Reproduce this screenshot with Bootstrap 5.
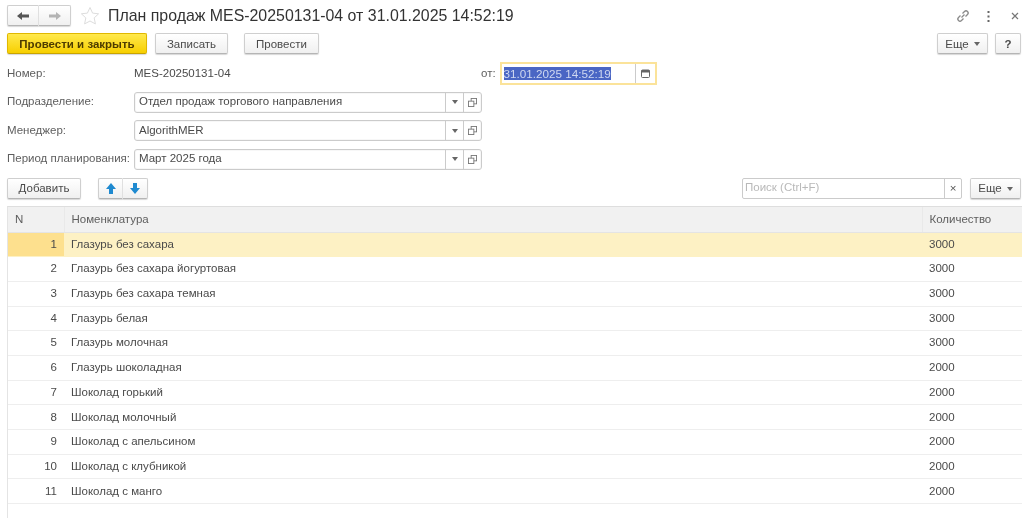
<!DOCTYPE html>
<html lang="ru">
<head>
  <meta charset="UTF-8">
  <title>План продаж</title>
  <link rel="stylesheet" href="https://cdn.jsdelivr.net/npm/bootstrap@5.3.0/dist/css/bootstrap.min.css">
  <style>
    html, body { height: 518px; overflow: hidden; }
    body { background: #fff; font-family: "Liberation Sans", Arial, sans-serif; font-size: 11.5px; color: #4a4a4a; }
    .page { padding: 4px 2px 0 7px; filter: blur(.3px); }
    .title-bar { height: 24px; }
    .nav-pair { width: 64px; height: 22px; margin-right: 9px; }
    .btn-1c { height: 21px; padding: 0; font-size: 11.5px; line-height: 18px; color: #4a4a4a; background: linear-gradient(#fff, #f0f0f0); border: 1px solid #cfcfcf; border-bottom-color: #b5b5b5; border-radius: 2px; box-shadow: 0 1px 1px #d8d8d8; }
    .btn-main { width: 140px; font-weight: 700; color: #4d3c00; background: linear-gradient(#ffe94d, #f7cf00); border-color: #e0b800; border-bottom-color: #c9a400; }
    .w-save { width: 73px; }
    .w-post { width: 75px; }
    .w-more { width: 51px; }
    .w-help { width: 26px; font-weight: 700; margin-left: 7px; }
    .w-add { width: 74px; }
    .seg { width: 32px; display: flex; align-items: center; justify-content: center; border-radius: 0; }
    .seg-l { border-radius: 2px 0 0 2px; border-right-color: #e2e2e2; }
    .seg-r { border-radius: 0 2px 2px 0; border-left: 0; }
    .seg-s { width: 25px; }
    .move-pair { margin-left: 17px; }
    .doc-title { font-size: 15.9px; color: #333; margin-left: 8px; white-space: nowrap; }
    .ic-dots { margin-left: 16px; }
    .ic-close { margin-left: 21px; margin-right: 3px; }
    .cmd-bar { margin-top: 4px; height: 23px; padding-right: 1px; }
    .form-line { height: 21px; margin-top: 7.5px; }
    .first-line { margin-top: 8px; }
    .lbl { width: 127px; color: #5e5e5e; flex: none; white-space: nowrap; }
    .no-val { width: 347px; }
    .fld { width: 348px; height: 21px; border: 1px solid #cbcbcb; border-radius: 3px; background: #fff; box-shadow: inset 0 0 0 1px #f7f7f7; }
    .fld-txt { flex: 1; padding-left: 4px; color: #4a4a4a; }
    .fld-cell { width: 18px; height: 100%; border-left: 1px solid #cbcbcb; display: flex; align-items: center; justify-content: center; }
    .date-lbl { color: #5e5e5e; }
    .date-fld { width: 157px; height: 23px; border: 2px solid #fbe39a; background: #fff; }
    .date-cell { width: 20px; }
    .sel-txt { background: #4a66c4; color: #cfd8f0; margin-left: 2px; line-height: 13px; font-size: 11.7px; }
    .caret { display: inline-block; border-top: 4px solid #666; border-left: 3px solid transparent; border-right: 3px solid transparent; vertical-align: middle; margin-left: 5px; }
    .fld-cell .caret { margin-left: 0; }
    .tools { margin-top: 7px; height: 23px; padding-right: 1px; }
    .search { width: 220px; height: 21px; border: 1px solid #cbcbcb; border-radius: 2px; color: #b9b9b9; }
    .search-txt { flex: 1; padding-left: 2px; }
    .search-x { width: 17px; height: 100%; border-left: 1px solid #cbcbcb; text-align: center; color: #555; line-height: 18px; }
    .grid-wrap { width: 1015px; height: 312px; margin-top: 6.5px; border-left: 1px solid #e4e4e4; border-top: 1px solid #dedede; }
    .grid-tb { table-layout: fixed; width: 100%; border-collapse: collapse; color: #4a4a4a; }
    .grid-tb th { height: 25px; background: #f1f1f1; font-weight: 400; color: #5e5e5e; padding: 0 7px; border-bottom: 1px solid #e4e4e4; }
    .grid-tb td { height: 24.700px; padding: 0 7px; border-bottom: 1px solid #eeeeee; }
    .grid-tb th + th { border-left: 1px solid #e9e9e9; }
    .grid-tb td.num { text-align: right; }
    .grid-tb tr.cur td { background: #fdf1c4; border-bottom-color: #fdf1c4; }
    .grid-tb tr.cur td.num { background: #fde08e; }
    .c-n { width: 56px; }
    .c-q { width: 100px; }
  </style>
</head>
<body>
  <div class="page">
    <div class="title-bar d-flex align-items-center">
      <div class="nav-pair d-flex">
        <div class="btn-1c seg seg-l"><svg width="14" height="10" viewBox="0 0 14 10"><path d="M1 5l5-4v2.500h7v3H6V9z" fill="#555"/></svg></div>
        <div class="btn-1c seg seg-r"><svg width="14" height="10" viewBox="0 0 14 10"><path d="M13 5L8 1v2.500H1v3h7V9z" fill="#b4b4b4"/></svg></div>
      </div>
      <svg width="20" height="20" viewBox="0 0 20 20"><path d="M10 1.500l2.600 5.600 6 .7-4.400 4.100 1.200 6L10 15l-5.400 2.900 1.200-6L1.400 7.800l6-.7z" fill="#fff" stroke="#dcdcdc"/></svg>
      <div class="doc-title">План продаж MES-20250131-04 от 31.01.2025 14:52:19</div>
      <div class="ms-auto d-flex align-items-center">
        <svg width="16" height="14" viewBox="0 0 16 14" fill="none" stroke="#8a8a8a" stroke-width="1.300"><path d="M6.500 8.500l3-3M5.500 6.500L3.500 8.500a2 2 0 0 0 3 3l2-2M10.500 7.500l2-2a2 2 0 0 0-3-3l-2 2"/></svg>
        <svg class="ic-dots" width="3" height="11" viewBox="0 0 3 11" fill="#666"><rect x=".5" width="2" height="2"/><rect x=".5" y="4.500" width="2" height="2"/><rect x=".5" y="9" width="2" height="2"/></svg>
        <svg class="ic-close" width="8" height="8" viewBox="0 0 8 8" stroke="#777" stroke-width="1.200"><path d="M1 1l6 6M7 1L1 7"/></svg>
      </div>
    </div>

    <div class="cmd-bar d-flex align-items-center">
      <button class="btn-1c btn-main">Провести и закрыть</button>
      <button class="btn-1c w-save ms-2">Записать</button>
      <button class="btn-1c w-post ms-3">Провести</button>
      <button class="btn-1c w-more ms-auto">Еще<span class="caret"></span></button>
      <button class="btn-1c w-help">?</button>
    </div>

    <div class="form-line first-line d-flex align-items-center">
      <div class="lbl">Номер:</div>
      <div class="no-val">MES-20250131-04</div>
      <div class="date-lbl">от:</div>
      <div class="date-fld d-flex align-items-center ms-1">
        <span class="sel-txt">31.01.2025 14:52:19</span>
        <div class="fld-cell date-cell ms-auto"><svg width="9" height="9" viewBox="0 0 9 9"><rect x=".5" y="1" width="8" height="7.500" rx="1" fill="#fff" stroke="#666"/><rect x=".5" y="1" width="8" height="2.500" fill="#666"/></svg></div>
      </div>
    </div>
    <div class="form-line d-flex align-items-center">
      <div class="lbl">Подразделение:</div>
      <div class="fld d-flex align-items-center"><div class="fld-txt">Отдел продаж торгового направления</div><div class="fld-cell"><span class="caret"></span></div><div class="fld-cell"><svg width="9" height="9" viewBox="0 0 10 10" fill="#fff" stroke="#777"><rect x="3.500" y=".5" width="6" height="6"/><rect x=".5" y="3.500" width="6" height="6"/></svg></div></div>
    </div>
    <div class="form-line d-flex align-items-center">
      <div class="lbl">Менеджер:</div>
      <div class="fld d-flex align-items-center"><div class="fld-txt">AlgorithMER</div><div class="fld-cell"><span class="caret"></span></div><div class="fld-cell"><svg width="9" height="9" viewBox="0 0 10 10" fill="#fff" stroke="#777"><rect x="3.500" y=".5" width="6" height="6"/><rect x=".5" y="3.500" width="6" height="6"/></svg></div></div>
    </div>
    <div class="form-line d-flex align-items-center">
      <div class="lbl">Период планирования:</div>
      <div class="fld d-flex align-items-center"><div class="fld-txt">Март 2025 года</div><div class="fld-cell"><span class="caret"></span></div><div class="fld-cell"><svg width="9" height="9" viewBox="0 0 10 10" fill="#fff" stroke="#777"><rect x="3.500" y=".5" width="6" height="6"/><rect x=".5" y="3.500" width="6" height="6"/></svg></div></div>
    </div>

    <div class="tools d-flex align-items-center">
      <button class="btn-1c w-add">Добавить</button>
      <div class="d-flex move-pair">
        <div class="btn-1c seg seg-s seg-l"><svg width="12" height="13" viewBox="0 0 12 13"><path d="M6 1l5 6H8v5H4V7H1z" fill="#1f8ad0"/></svg></div>
        <div class="btn-1c seg seg-s seg-r"><svg width="12" height="13" viewBox="0 0 12 13"><path d="M6 12L1 6h3V1h4v5h3z" fill="#1f8ad0"/></svg></div>
      </div>
      <div class="search d-flex align-items-center ms-auto"><div class="search-txt">Поиск (Ctrl+F)</div><div class="search-x">×</div></div>
      <button class="btn-1c w-more ms-2">Еще<span class="caret"></span></button>
    </div>

    <div class="grid-wrap">
      <table class="grid-tb">
        <thead><tr><th class="c-n">N</th><th>Номенклатура</th><th class="c-q">Количество</th></tr></thead>
        <tbody id="grid-body"></tbody>
      </table>
    </div>
  </div>

  <script src="https://cdn.jsdelivr.net/npm/bootstrap@5.3.0/dist/js/bootstrap.bundle.min.js"></script>
  <script>
    const rows = [
      ['Глазурь без сахара', 3000], ['Глазурь без сахара йогуртовая', 3000], ['Глазурь без сахара темная', 3000],
      ['Глазурь белая', 3000], ['Глазурь молочная', 3000], ['Глазурь шоколадная', 2000],
      ['Шоколад горький', 2000], ['Шоколад молочный', 2000], ['Шоколад с апельсином', 2000],
      ['Шоколад с клубникой', 2000], ['Шоколад с манго', 2000]
    ];
    document.getElementById('grid-body').innerHTML = rows.map((r, i) =>
      `<tr class="${i === 0 ? 'cur' : ''}"><td class="num">${i + 1}</td><td>${r[0]}</td><td>${r[1]}</td></tr>`).join('');
  </script>
</body>
</html>
